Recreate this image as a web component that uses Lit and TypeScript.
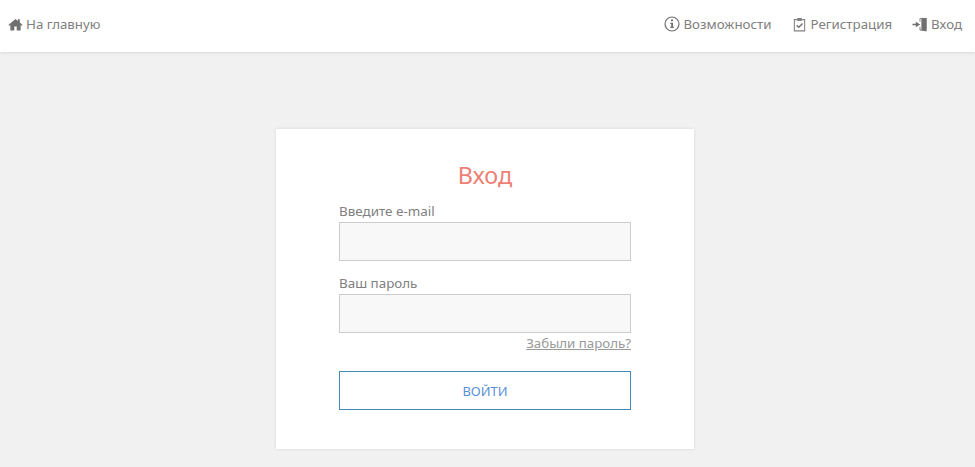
import { LitElement, html, css } from "lit";
import { customElement } from "lit/decorators.js";

@customElement("app-root")
export class AppRoot extends LitElement {
  static styles = css`
    :host {
      display: flex;
      flex-direction: column;
      height: 467px;
      overflow: hidden;
      background: #f1f1f1;
      font-family: "Noto Sans", "Open Sans", sans-serif;
      color: #808080;
    }
    .nav {
      height: 52px;
      flex: none;
      box-sizing: border-box;
      background: #fff;
      box-shadow: 0 1px 3px rgba(0, 0, 0, 0.1);
      display: flex;
      align-items: center;
      justify-content: space-between;
      padding: 0 13px 4px 8px;
      font-size: 13.3px;
    }
    .nav a {
      display: flex;
      align-items: center;
      gap: 4px;
    }
    .nav a.tight {
      gap: 3px;
    }
    .right {
      display: flex;
      gap: 20px;
    }
    svg {
      width: 15px;
      height: 15px;
      flex: none;
    }
    svg.info {
      width: 16px;
      height: 16px;
    }
    .main {
      flex: 1;
      display: flex;
      justify-content: center;
      padding: 77px 5px 0 0;
    }
    .card {
      width: 292px;
      height: 320px;
      padding: 0 63px;
      background: #fff;
      box-shadow: 0 0 3px rgba(0, 0, 0, 0.12);
      display: flex;
      flex-direction: column;
    }
    h1 {
      margin: 30px 0 0;
      font-size: 23.4px;
      line-height: 32px;
      font-weight: 400;
      text-align: center;
      color: #ee7f75;
    }
    label {
      display: block;
      font-size: 13.4px;
      line-height: 18px;
      margin-bottom: 2px;
    }
    .first { margin-top: 11px; }
    .second { margin-top: 13px; }
    .input {
      height: 39px;
      box-sizing: border-box;
      border: 1px solid #ccc;
      background: #f8f8f8;
    }
    .forgot {
      align-self: flex-end;
      font-size: 13.3px;
      line-height: 20px;
      color: #999;
      text-decoration: underline;
    }
    .btn {
      margin-top: 18px;
      height: 39px;
      box-sizing: border-box;
      border: 1px solid #4289b5;
      display: flex;
      align-items: center;
      justify-content: center;
      color: #5b90d6;
      font-size: 13px;
    }
  `;

  render() {
    return html`
      <div class="nav">
        <a class="tight">
          <svg viewBox="0 0 16 16"><path fill="#707070" d="M8 2 .4 8.400l.9 1L2.500 8.400V14.500h4.200v-4.300h2.600v4.300h4.200V8.400l1.200 1 .9-1-3-2.500V2.500h-2.100v1.700z"/></svg>
          На главную
        </a>
        <div class="right">
          <a class="tight">
            <svg class="info" viewBox="0 0 16 16"><circle cx="8" cy="8" r="7" fill="none" stroke="#707070" stroke-width="1.200"/><path fill="#707070" d="M7 3.500h2v1.800H7zM6.300 6.800h2.700v4h.8V12H6.300v-1.200h.9V8H6.300z"/></svg>
            Возможности
          </a>
          <a>
            <svg viewBox="0 0 16 16"><path fill="none" stroke="#808080" stroke-width="1.100" d="M5.300 2.800H2.500v12h11v-12h-2.800"/><path fill="#808080" d="M5.500 1h5v3.200h-5z"/><path fill="none" stroke="#707070" stroke-width="1.500" d="m5 8.700 2.300 2.300L11.200 7"/></svg>
            Регистрация
          </a>
          <a>
            <svg viewBox="0 0 16 16"><path fill="none" stroke="#808080" d="M8.500 5V1.500h6.500v12.500H8.500v-3.500"/><path fill="#707070" d="M10 1.500 15.500 1v14.500L10 14zM0.500 7.200H4V5L8.800 8 4 11V8.800H.5z"/></svg>
            Вход
          </a>
        </div>
      </div>
      <div class="main">
        <div class="card">
          <h1>Вход</h1>
          <label class="first">Введите e-mail</label>
          <div class="input"></div>
          <label class="second">Ваш пароль</label>
          <div class="input"></div>
          <a class="forgot">Забыли пароль?</a>
          <div class="btn">ВОЙТИ</div>
        </div>
      </div>
    `;
  }
}
